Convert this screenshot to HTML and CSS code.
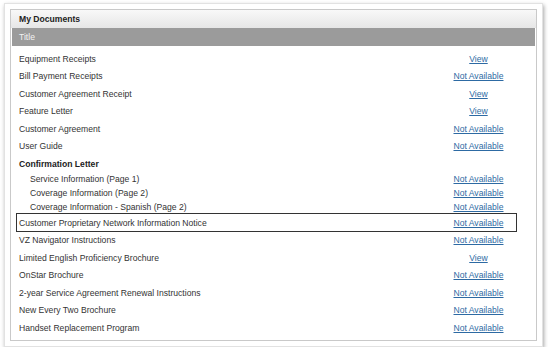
FILE: index.html
```html
<!DOCTYPE html>
<html lang="en">
<head>
<meta charset="UTF-8">
<title>My Documents</title>
<link rel="stylesheet" href="styles.css">
</head>
<body>

<div class="frame">
  <div class="panel">
    <div class="panel-head">My Documents</div>
    <div class="title-bar">Title</div>

    <ul class="doc-list">
      <li class="doc-row"><span>Equipment Receipts</span><a href="#">View</a></li>
      <li class="doc-row"><span>Bill Payment Receipts</span><a href="#">Not Available</a></li>
      <li class="doc-row"><span>Customer Agreement Receipt</span><a href="#">View</a></li>
      <li class="doc-row"><span>Feature Letter</span><a href="#">View</a></li>
      <li class="doc-row"><span>Customer Agreement</span><a href="#">Not Available</a></li>
      <li class="doc-row"><span>User Guide</span><a href="#">Not Available</a></li>
      <li class="doc-row group"><span>Confirmation Letter</span></li>
      <li class="doc-row sub"><span>Service Information (Page 1)</span><a href="#">Not Available</a></li>
      <li class="doc-row sub"><span>Coverage Information (Page 2)</span><a href="#">Not Available</a></li>
      <li class="doc-row sub"><span>Coverage Information - Spanish (Page 2)</span><a href="#">Not Available</a></li>
      <li class="doc-row selected"><span>Customer Proprietary Network Information Notice</span><a href="#">Not Available</a></li>
      <li class="doc-row"><span>VZ Navigator Instructions</span><a href="#">Not Available</a></li>
      <li class="doc-row"><span>Limited English Proficiency Brochure</span><a href="#">View</a></li>
      <li class="doc-row"><span>OnStar Brochure</span><a href="#">Not Available</a></li>
      <li class="doc-row"><span>2-year Service Agreement Renewal Instructions</span><a href="#">Not Available</a></li>
      <li class="doc-row"><span>New Every Two Brochure</span><a href="#">Not Available</a></li>
      <li class="doc-row"><span>Handset Replacement Program</span><a href="#">Not Available</a></li>
    </ul>
  </div>
</div>

</body>
</html>
```

FILE: styles.css
```css
body {
  margin: 0;
  background: #fff;
  font-family: "Liberation Sans", Arial, sans-serif;
  font-size: 8.6px;
  color: #333;
}

.frame {
  width: 527px;
  height: 332px;
  margin: 3px 0 0 4px;
  padding: 5px;
  background: #fff;
  border: 1px solid #e2e2e2;
  box-shadow: 1px 2px 4px rgba(0, 0, 0, 0.35);
}

.panel {
  height: 330px;
  border: 1px solid #c9c9c9;
}

.panel-head {
  height: 18px;
  line-height: 18px;
  padding-left: 8px;
  font-weight: bold;
  color: #222;
  background: linear-gradient(#f8f8f8, #e6e6e6);
}

.title-bar {
  height: 18px;
  line-height: 18px;
  margin: 0 1px;
  padding-left: 7px;
  color: #f2f2f2;
  background: #9b9b9b;
}

.doc-list {
  list-style: none;
  margin: 4px 20px 0 6px;
  padding: 0;
}

.doc-row {
  display: flex;
  align-items: center;
  height: 17.5px;
  padding-left: 2px;
}

.doc-row span {
  flex: 1;
}

.doc-row a {
  width: 75px;
  text-align: center;
  color: #2d6aa3;
}

.doc-row.group {
  font-weight: bold;
  color: #222;
}

.doc-row.sub {
  height: 13.8px;
  padding-left: 13px;
}

.doc-row.selected {
  outline: 1px solid #333;
  outline-offset: 0.5px;
}
```
